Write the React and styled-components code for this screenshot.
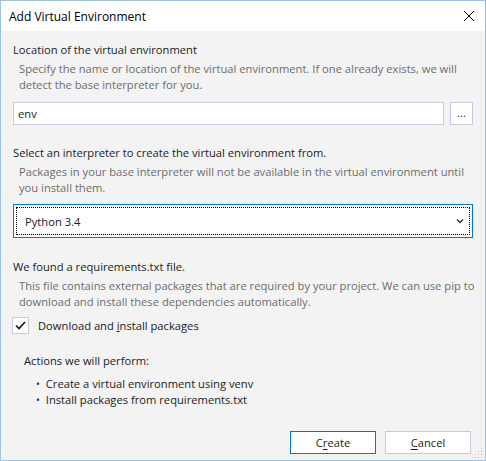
import React from "react";
import styled, { createGlobalStyle } from "styled-components";

const GlobalStyle = createGlobalStyle`
  html, body {
    margin: 0;
    padding: 0;
    background: #ffffff;
  }
  * {
    box-sizing: border-box;
  }
`;

const Window = styled.div`
  position: relative;
  width: 486px;
  height: 461px;
  display: flex;
  flex-direction: column;
  border: 1px solid #9fc3e3;
  font-family: "Open Sans", "Noto Sans", sans-serif;
  font-size: 11.2px;
  color: #1b1b1b;
`;

const TitleBar = styled.div`
  height: 30px;
  flex-shrink: 0;
  display: flex;
  align-items: center;
  justify-content: space-between;
  padding: 0 9px 0 8px;
  background: #ffffff;
  font-size: 12px;
  color: #000;
`;

const CloseButton = styled.div`
  width: 14px;
  height: 14px;
  display: flex;
  align-items: center;
  justify-content: center;
`;

const Body = styled.div`
  flex: 1;
  display: flex;
  flex-direction: column;
  background: #f3f3f3;
  padding: 11px 12px 0 12px;
`;

const Heading = styled.div`
  line-height: 16px;
  white-space: nowrap;
  color: #1b1b1b;
`;

const Desc = styled.div`
  margin: 3px 0 0 6px;
  line-height: 16px;
  white-space: nowrap;
  color: #6d6d6d;
`;

const Row = styled.div`
  display: flex;
  gap: 6px;
  margin-top: ${(p) => p.$top || 0}px;
`;

const TextInput = styled.div`
  flex: 1;
  height: 23px;
  background: #fff;
  border: 1px solid #c9cbdc;
  display: flex;
  align-items: center;
  padding-left: 4px;
  color: #1b1b1b;
`;

const BrowseButton = styled.div`
  width: 23px;
  height: 23px;
  background: #fff;
  border: 1px solid #c9cbdc;
  display: flex;
  align-items: center;
  justify-content: center;
  font-size: 11px;
  line-height: 1;
  padding-bottom: 2px;
`;

const SectionHeading = styled(Heading)`
  margin-top: ${(p) => p.$top}px;
`;

const Select = styled.div`
  margin-top: 8px;
  height: 34px;
  background: #fff;
  border: 1px solid #0078d7;
  padding: 2px;
`;

const SelectInner = styled.div`
  height: 100%;
  border: 1px dotted #000;
  display: flex;
  align-items: center;
  justify-content: space-between;
  padding: 0 5px 0 8px;
`;

const CheckRow = styled.label`
  display: flex;
  align-items: center;
  gap: 9px;
  margin: 7px 0 0 -1px;
`;

const CheckBox = styled.div`
  width: 17px;
  height: 17px;
  border: 1px solid #c9cbdc;
  background: #fff;
  display: flex;
  align-items: center;
  justify-content: center;
`;

const Actions = styled.div`
  margin: 19px 0 0 11px;
`;

const ActionList = styled.ul`
  list-style: none;
  margin: 7px 0 0 0;
  padding: 0 0 0 12px;
`;

const ActionItem = styled.li`
  line-height: 16px;
  display: flex;
  gap: 6px;
  &::before {
    content: "•";
    font-size: 10px;
  }
`;

const Footer = styled.div`
  margin-top: auto;
  margin-bottom: 6px;
  display: flex;
  justify-content: flex-end;
  gap: 9px;
  padding-right: 2px;
`;

const Button = styled.div`
  width: 86px;
  height: 23px;
  display: flex;
  align-items: center;
  justify-content: center;
  background: #fff;
  border: 1px solid ${(p) => (p.$primary ? "#0078d7" : "#c9cbdc")};
  color: #1b1b1b;
  u {
    text-decoration: underline;
    text-underline-offset: 2px;
  }
`;

const Grip = styled.svg`
  position: absolute;
  right: 1px;
  bottom: 1px;
`;

const gripDots = [
  [10, 2],
  [10, 5],
  [7, 5],
  [10, 8],
  [7, 8],
  [4, 8],
  [10, 11],
  [7, 11],
  [4, 11],
  [1, 11],
];

export default function App() {
  return (
    <>
      <GlobalStyle />
      <Window>
        <TitleBar>
          <span>Add Virtual Environment</span>
          <CloseButton>
            <svg width="12" height="12" viewBox="0 0 12 12">
              <path d="M1 1 L11 11 M11 1 L1 11" stroke="#000" strokeWidth="1" />
            </svg>
          </CloseButton>
        </TitleBar>
        <Body>
          <Heading>Location of the virtual environment</Heading>
          <Desc>
            Specify the name or location of the virtual environment. If one already exists, we will
            <br />
            detect the base interpreter for you.
          </Desc>
          <Row $top={9}>
            <TextInput>env</TextInput>
            <BrowseButton>...</BrowseButton>
          </Row>

          <SectionHeading $top={20}>Select an interpreter to create the virtual environment from.</SectionHeading>
          <Desc>
            Packages in your base interpreter will not be available in the virtual environment until
            <br />
            you install them.
          </Desc>
          <Select>
            <SelectInner>
              <span>Python 3.4</span>
              <svg width="8" height="6" viewBox="0 0 8 6">
                <path d="M1 1.5 L4 4.5 L7 1.5" stroke="#333" strokeWidth="1.4" fill="none" />
              </svg>
            </SelectInner>
          </Select>

          <SectionHeading $top={21}>We found a requirements.txt file.</SectionHeading>
          <Desc>
            This file contains external packages that are required by your project. We can use pip to
            <br />
            download and install these dependencies automatically.
          </Desc>
          <CheckRow>
            <CheckBox>
              <svg width="11" height="9" viewBox="0 0 11 9">
                <path d="M1 4.5 L4 7.5 L10 1" stroke="#111" strokeWidth="1.6" fill="none" />
              </svg>
            </CheckBox>
            <span>
              Download and <u>i</u>nstall packages
            </span>
          </CheckRow>

          <Actions>
            <Heading>Actions we will perform:</Heading>
            <ActionList>
              <ActionItem>Create a virtual environment using venv</ActionItem>
              <ActionItem>Install packages from requirements.txt</ActionItem>
            </ActionList>
          </Actions>

          <Footer>
            <Button $primary>
              <span>
                C<u>r</u>eate
              </span>
            </Button>
            <Button>
              <span>
                <u>C</u>ancel
              </span>
            </Button>
          </Footer>
        </Body>
        <Grip width="12" height="12" viewBox="0 0 12 12">
          {gripDots.map(([x, y]) => (
            <rect key={`${x}-${y}`} x={x - 1} y={y - 1} width="1" height="1" fill="#b9b9c9" />
          ))}
        </Grip>
      </Window>
    </>
  );
}
